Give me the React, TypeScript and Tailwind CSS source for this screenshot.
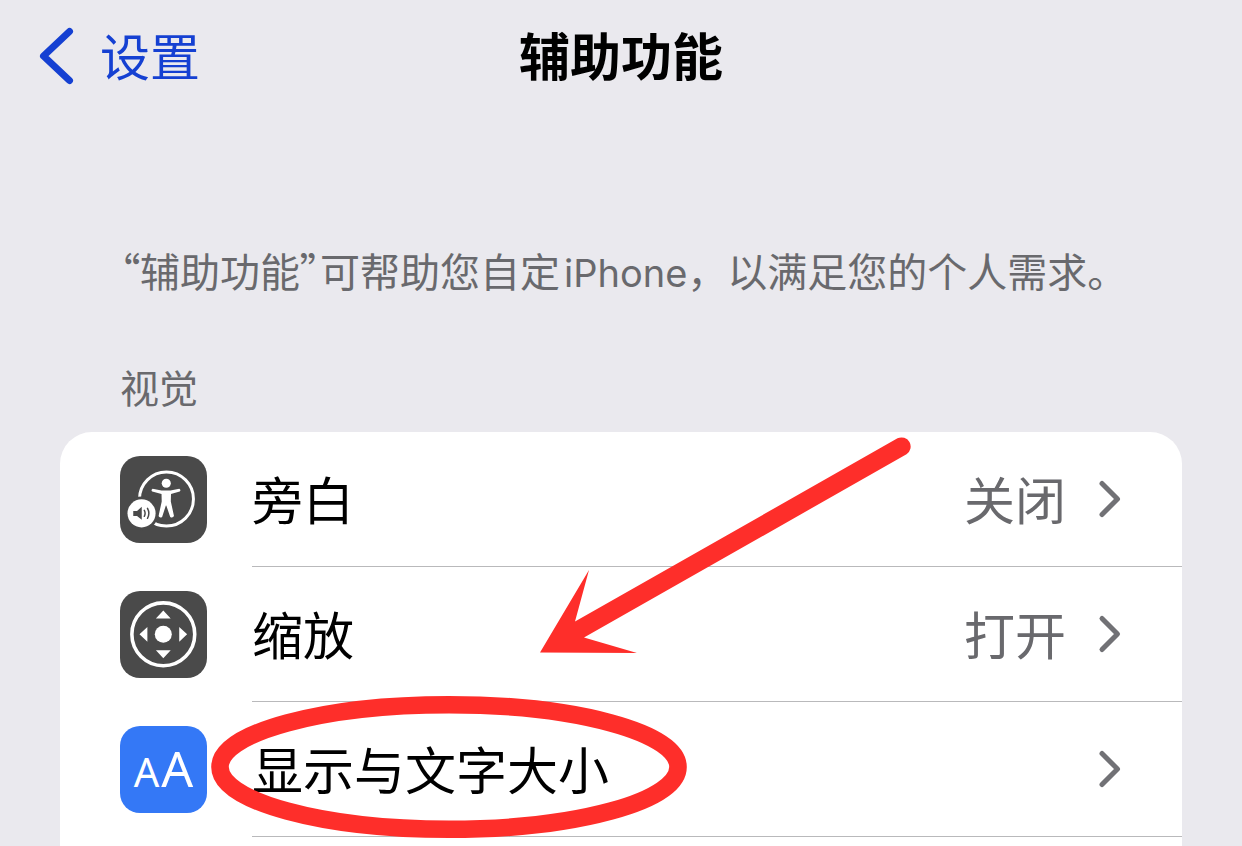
import type { ReactNode } from "react";

function VoiceOverIcon() {
  return (
    <svg viewBox="0 0 88 88" className="size-full" aria-hidden="true">
      <circle cx="47" cy="43.5" r="27.3" fill="none" stroke="#fff" strokeWidth="3" />
      <circle cx="46.8" cy="27.5" r="4.6" fill="#fff" />
      <path
        d="M33 33.2 L42 34.8 H51 L60 33.2 Q62 34.4 60.4 36 L51.6 38.4 L51.4 46 L54.6 60.6 Q53.4 63 50.8 61.6 L46.8 50 H46.4 L42.6 61.6 Q40 63 39 60.6 L42.2 46 L42 38.4 L32.6 36 Q31 34.4 33 33.2 Z"
        fill="#fff"
      />
      <circle cx="21.8" cy="58" r="17" fill="#4a4a4a" />
      <circle cx="21.8" cy="58" r="14.2" fill="#fff" />
      <path d="M13.4 55.6 H17.2 L22 51.4 V64.6 L17.2 60.6 H13.4 Z" fill="#4a4a4a" />
      <path
        d="M24.6 55 Q26.2 58 24.6 61 M27.8 53 Q30.6 58 27.8 63"
        fill="none"
        stroke="#4a4a4a"
        strokeWidth="1.5"
        strokeLinecap="round"
      />
    </svg>
  );
}

function ZoomIcon() {
  return (
    <svg viewBox="0 0 88 88" className="size-full" aria-hidden="true">
      <circle cx="43.8" cy="43.8" r="31.8" fill="none" stroke="#fff" strokeWidth="3.6" />
      <circle cx="43.8" cy="43.8" r="8.6" fill="#fff" />
      <path
        d="M43.8 19.8 L51.3 27.8 H36.3 Z M43.8 68 L51.3 60 H36.3 Z M19.7 43.8 L27.7 36.4 V51.4 Z M67.9 43.8 L59.9 36.4 V51.4 Z"
        fill="#fff"
      />
    </svg>
  );
}

function TextSizeIcon() {
  return (
    <span
      className="flex size-full items-baseline justify-center gap-0.5 font-['Noto_Sans',sans-serif] leading-[84px] text-white"
      aria-hidden="true"
    >
      <span className="text-[40px]">A</span>
      <span className="text-[50px]">A</span>
    </span>
  );
}

function Chevron() {
  return (
    <svg viewBox="0 0 24 40" className="h-10 w-6 shrink-0" aria-hidden="true">
      <path
        d="M4 4.5 L19.5 20 L4 35.5"
        fill="none"
        stroke="#717175"
        strokeWidth="5"
        strokeLinecap="round"
        strokeLinejoin="round"
      />
    </svg>
  );
}

type RowProps = {
  icon: ReactNode;
  iconBg: string;
  label: string;
  value?: string;
};

function Row({ icon, iconBg, label, value }: RowProps) {
  return (
    <li>
      <button type="button" className="flex h-[135px] w-full items-center gap-[45px] pl-[60px] text-left">
        <span className={`size-[87px] shrink-0 overflow-hidden rounded-[20px] ${iconBg}`}>{icon}</span>
        <span className="flex h-full flex-1 items-center border-b border-[#b9b9bb] pr-[60px]">
          <span className="flex-1 pb-0.5 text-[51px] leading-none text-black">{label}</span>
          {value && <span className="mr-8 pb-0.5 text-[51px] leading-none text-[#69696d]">{value}</span>}
          <Chevron />
        </span>
      </button>
    </li>
  );
}

// Hand-drawn style marks over the list
function Annotations() {
  return (
    <svg
      viewBox="60 432 900 414"
      className="pointer-events-none absolute top-0 left-0 h-[414px] w-[900px]"
      aria-hidden="true"
    >
      <path
        d="M540 652.5 L589 570 L575 621.5 L897.5 438.3 A9.2 9.2 0 0 1 906.5 454.3 L584 637.5 L637 653 Z"
        fill="#fe2e2a"
      />
      <ellipse cx="449" cy="767" rx="229" ry="62.3" fill="none" stroke="#fe2e2a" strokeWidth="17.6" />
    </svg>
  );
}

export default function App() {
  return (
    <div
      lang="zh-CN"
      className="flex min-h-screen flex-col bg-[#eae9ee] font-['Noto_Sans_CJK_SC',sans-serif]"
    >
      <header className="grid h-28 grid-cols-[1fr_auto_1fr] items-center px-9">
        <button type="button" className="flex items-center gap-6 justify-self-start text-[#1540d2]">
          <svg viewBox="0 0 40 60" className="h-[60px] w-10" aria-hidden="true">
            <path
              d="M33.5 5.5 L7.5 30 L33.5 54.5"
              fill="none"
              stroke="currentColor"
              strokeWidth="7"
              strokeLinecap="round"
              strokeLinejoin="round"
            />
          </svg>
          <span className="pb-1 text-[50px] leading-none">设置</span>
        </button>
        <h1 className="pb-1 text-[51px] leading-none font-bold text-black">辅助功能</h1>
      </header>

      <main className="flex flex-1 flex-col px-[60px] pt-32">
        <p className="pr-5 pl-[60px] text-[40px] leading-[60px] text-[#69696d]">
          <span className="[font-feature-settings:'palt']">“</span>辅助功能
          <span className="[font-feature-settings:'palt']">”</span>可帮助您自定
          <span className="ml-1 font-['Inter',sans-serif] text-[38px] leading-none">iPhone</span>
          ，以满足您的个人需求。
        </p>
        <h2 className="mt-14 px-[60px] text-[39px] leading-[60px] text-[#69696d]">视觉</h2>
        <section className="relative mt-4 flex-1 rounded-t-[32px] bg-white">
          <ul>
            <Row icon={<VoiceOverIcon />} iconBg="bg-[#4a4a4a]" label="旁白" value="关闭" />
            <Row icon={<ZoomIcon />} iconBg="bg-[#4a4a4a]" label="缩放" value="打开" />
            <Row icon={<TextSizeIcon />} iconBg="bg-[#3478f6]" label="显示与文字大小" />
          </ul>
          <Annotations />
        </section>
      </main>
    </div>
  );
}
